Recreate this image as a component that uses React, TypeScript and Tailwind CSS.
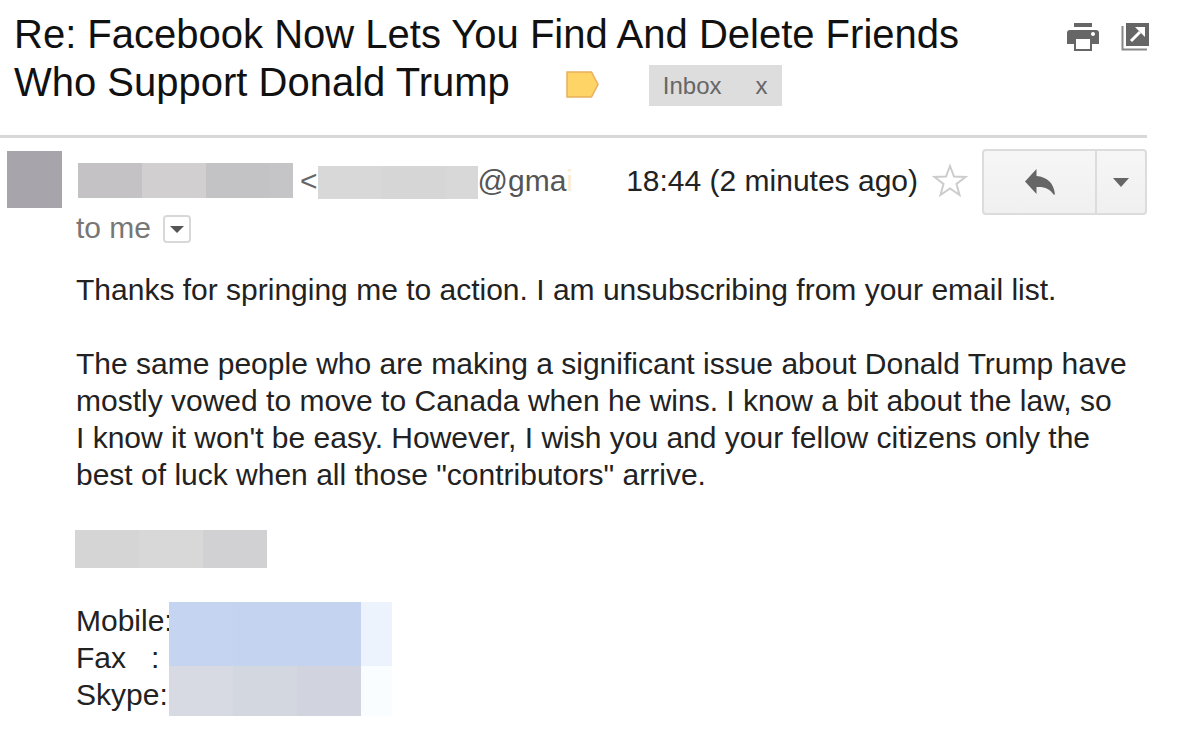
import { useState } from 'react';
import clsx from 'clsx';

const contactLabels = ['Mobile:', 'Fax   :', 'Skype:'];

interface RedactedProps {
  blocks: string[];
  className?: string;
}

function Redacted({ blocks, className }: RedactedProps) {
  return (
    <span className={clsx('flex shrink-0', className)} aria-hidden="true">
      {blocks.map((block, index) => (
        <span key={index} className={block} />
      ))}
    </span>
  );
}

function PrintIcon() {
  return (
    <svg width="34" height="28" viewBox="0 0 34 28" fill="#666">
      <path d="M8 0h18v4H8z" />
      <path fillRule="evenodd" d="M4 7h26q3 0 3 3v11h-7v7H8v-7H1V10q0-3 3-3zM10 16v10h14V16zM27 9a2 2 0 1 0 0.010 0z" />
    </svg>
  );
}

function NewWindowIcon() {
  return (
    <svg width="29" height="28" viewBox="0 0 29 28">
      <path d="M1.500 3v23.500H26" fill="none" stroke="#888" strokeWidth="2" />
      <path d="M5 0h23v23H5z" fill="#666" />
      <path d="M10 18L19 9" fill="none" stroke="#fff" strokeWidth="3" />
      <path d="M14 4h10v10l-3.500-3.500-3-3z" fill="#fff" />
    </svg>
  );
}

function Caret() {
  return (
    <svg width="16" height="9" viewBox="0 0 16 9" fill="#666">
      <path d="M0 0h16L8 9z" />
    </svg>
  );
}

export default function App() {
  const [starred, setStarred] = useState(false);
  const [hasLabel, setHasLabel] = useState(true);

  return (
    <main className="min-h-screen bg-white font-['Liberation_Sans',Arial,sans-serif] text-[30px] leading-[37px] text-[#222]">
      <header className="mr-[53px] flex items-start border-b-3 border-[#d8d8d8] pt-2.5 pb-[29px] pl-3.5">
        <div className="flex-1 pr-9 text-[40px] leading-[48px] text-[#111]">
          <h1 className="inline">Re: Facebook Now Lets You Find And Delete Friends Who Support Donald Trump</h1>
          <svg className="ml-14 inline-block align-[-2px]" width="33" height="27" viewBox="0 0 33 27">
            <path d="M1 1h24.500L32 13.500L25.500 26H1z" fill="#ffd466" stroke="#e8b05c" strokeWidth="1.500" />
          </svg>
          {hasLabel && (
            <span className="ml-[50px] inline-flex h-[41px] items-center gap-[34px] bg-[#ddd] px-3.5 align-middle text-[24px] leading-[41px] text-[#666]">
              <span>Inbox</span>
              <button type="button" aria-label="Remove label Inbox" onClick={() => setHasLabel(false)}>
                x
              </button>
            </span>
          )}
        </div>
        <div className="-mr-[3px] flex gap-[21px] pt-[13px]">
          <button type="button" aria-label="Print">
            <PrintIcon />
          </button>
          <button type="button" aria-label="Open in new window">
            <NewWindowIcon />
          </button>
        </div>
      </header>

      <section className="mr-[53px] flex gap-3.5 pt-[11px] pl-[7px]">
        <div className="mt-0.5 h-[57px] w-[55px] shrink-0 bg-[#a7a4ab]" />
        <div className="min-w-0 flex-1">
          <div className="flex h-[66px] items-center">
            <Redacted
              className="mb-1 ml-0.5 h-[35px]"
              blocks={['w-16 bg-[#c4c2c5]', 'w-16 bg-[#d1cfd0]', 'w-16 bg-[#c3c2c4]', 'w-[23px] bg-[#c5c4c6]']}
            />
            <span className="ml-[7px] pb-1 text-[#666]">&lt;</span>
            <Redacted className="h-[33px]" blocks={['w-16 bg-[#d8d8d8]', 'w-16 bg-[#d7d6d7]', 'w-8 bg-[#d8d8d8]']} />
            <span className="pb-1 whitespace-nowrap text-[#555]">
              @gma<span className="text-[#fdeccb]">i</span>
            </span>
            <time className="ml-auto pb-1 whitespace-nowrap">18:44 (2 minutes ago)</time>
            <button
              type="button"
              className="ml-3.5 pb-1"
              aria-label="Star"
              aria-pressed={starred}
              onClick={() => setStarred(!starred)}
            >
              <svg width="36" height="35" viewBox="0 0 36 35">
                <path
                  d="M18 3l4 10.500 11.500.5-9 7 3 11L18 25.500 8.500 32l3-11-9-7L14 13.500z"
                  fill={starred ? '#ffd466' : '#fff'}
                  stroke="#ccc"
                  strokeWidth="2"
                />
              </svg>
            </button>
            <div className="ml-3.5 flex h-[66px] rounded-sm border-2 border-[#dcdcdc] bg-linear-to-b from-[#f6f6f6] to-[#f0f0f0]">
              <button type="button" className="flex w-[111px] items-center justify-center" aria-label="Reply">
                <svg width="32" height="26" viewBox="0 0 32 26" fill="#666">
                  <path d="M1 12.500L12.500 0v7C23 8 30 14 31 25.500h-1.500C26 20 21 17.500 12.500 18v7z" />
                </svg>
              </button>
              <button type="button" className="flex w-[50px] items-center justify-center border-l-2 border-[#dcdcdc]" aria-label="More">
                <Caret />
              </button>
            </div>
          </div>
          <div className="flex h-[28px] items-center gap-3">
            <span className="pb-1 text-[#777]">to me</span>
            <button
              type="button"
              className="flex size-7 items-center justify-center rounded-sm border-2 border-[#d8d8d8]"
              aria-label="Show details"
            >
              <svg width="14" height="7" viewBox="0 0 14 7" fill="#555">
                <path d="M0 0h14L7 7z" />
              </svg>
            </button>
          </div>
        </div>
      </section>

      <article className="pt-7 pr-8 pl-[76px]">
        <p>Thanks for springing me to action. I am unsubscribing from your email list.</p>
        <p className="mt-[37px]">
          The same people who are making a significant issue about Donald Trump have
          <br />
          mostly vowed to move to Canada when he wins. I know a bit about the law, so
          <br />
          I know it won't be easy. However, I wish you and your fellow citizens only the
          <br />
          best of luck when all those "contributors" arrive.
        </p>
        <Redacted className="mt-[37px] -ml-px h-[38px]" blocks={['w-16 bg-[#d5d5d5]', 'w-16 bg-[#d8d8d8]', 'w-16 bg-[#d1d1d3]']} />
        <div className="mt-[34px] flex">
          <ul className="w-[93px] shrink-0 whitespace-pre">
            {contactLabels.map((label) => (
              <li key={label}>{label}</li>
            ))}
          </ul>
          <div>
            <Redacted className="h-16" blocks={['w-16 bg-[#c5d4f1]', 'w-32 bg-[#c4d3f0]', 'w-[31px] bg-[#ecf3fd]']} />
            <Redacted
              className="h-[50px]"
              blocks={['w-16 bg-[#d7dae2]', 'w-16 bg-[#d3d7df]', 'w-16 bg-[#d1d4de]', 'w-[31px] bg-[#fafdff]']}
            />
          </div>
        </div>
      </article>
    </main>
  );
}
